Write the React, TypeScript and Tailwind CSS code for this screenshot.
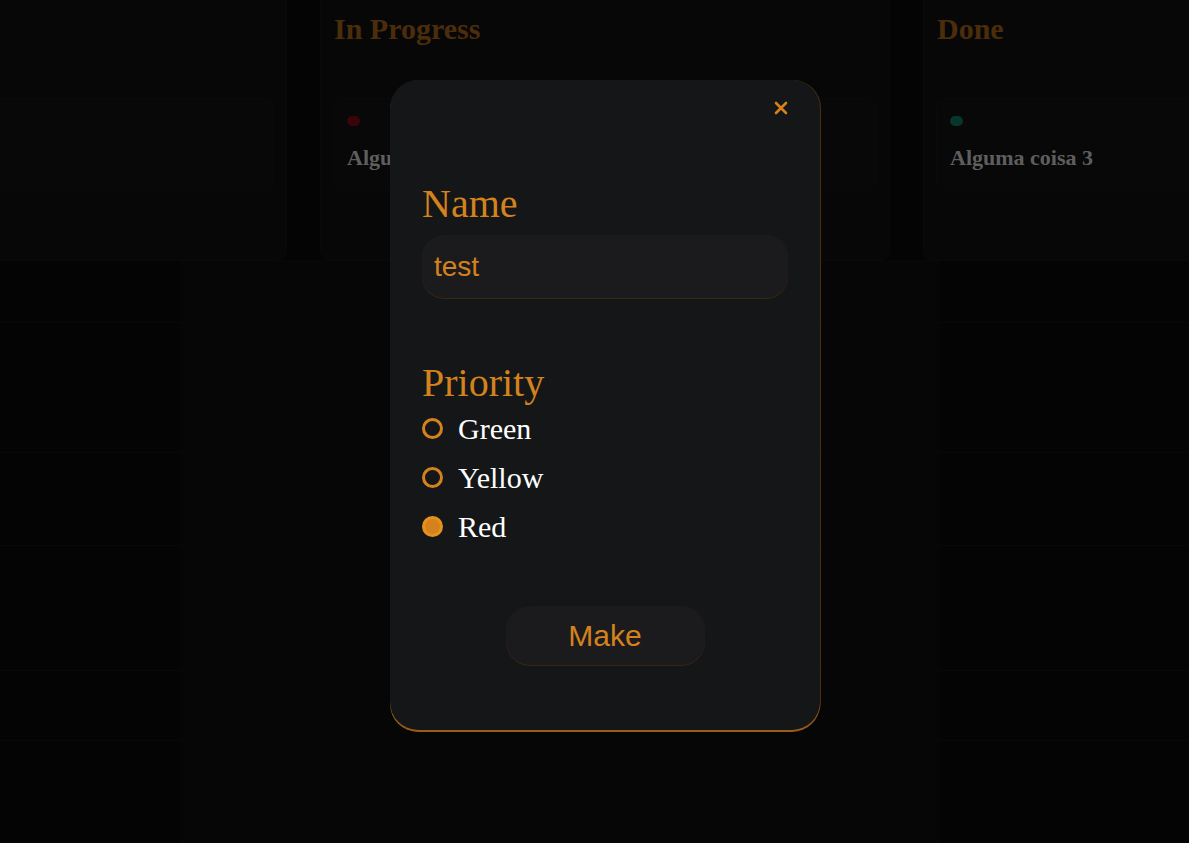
import React, { useState } from 'react';

type Task = { id: number; title: string; dot: string };

// first column sits mostly off-screen, so its title and card text are left empty
const columns: { name: string; tasks: Task[] }[] = [
  { name: '', tasks: [{ id: 1, title: '', dot: 'bg-transparent' }] },
  { name: 'In Progress', tasks: [{ id: 2, title: 'Alguma coisa 2', dot: 'bg-[#3a0509]' }] },
  { name: 'Done', tasks: [{ id: 3, title: 'Alguma coisa 3', dot: 'bg-[#08352c]' }] },
];

const priorities = ['Green', 'Yellow', 'Red'];

// faint rows behind the board (heights in px)
const bands = ['h-[62px]', 'h-[130px]', 'h-[93px]', 'h-[125px]', 'h-[70px]', 'h-[120px]'];

const serif = "font-['Liberation_Serif','Times_New_Roman',serif]";
const sans = "font-['Liberation_Sans',Arial,sans-serif]";

const Column: React.FC<{ name: string; tasks: Task[] }> = ({ name, tasks }) => (
  <div className="w-[570px] shrink-0 h-[272px] rounded-lg bg-[#070707] border border-[#090909] px-[12px] pt-[25px]">
    <h2 className={`${serif} h-[30px] text-[30px] leading-none font-bold text-[#4b2d0c] pl-[1px]`}>{name}</h2>
    <div className="mt-[54px] flex flex-col gap-3">
      {tasks.map((t) => (
        <div key={t.id} className="h-[93px] rounded-lg bg-[#080808] border border-[#0a0a0a] px-[13px] pt-[17px]">
          <div className={`w-[13px] h-[10px] rounded-full ${t.dot}`} />
          <p className={`${serif} mt-[21px] h-[22px] text-[22px] leading-none font-bold text-[#5e5e5e]`}>{t.title}</p>
        </div>
      ))}
    </div>
  </div>
);

const Radio: React.FC<{ checked: boolean }> = ({ checked }) => (
  <span
    className={`w-[21px] h-[21px] rounded-full border-[3px] shrink-0 ${
      checked ? 'border-[#e8901c] bg-[#d4821e]' : 'border-[#d4821e] bg-transparent'
    }`}
  />
);

export default function App() {
  const [name, setName] = useState('test');
  const [priority, setPriority] = useState('Red');

  return (
    <div className="relative w-[1189px] h-[843px] overflow-hidden bg-[#040404]">
      {/* board */}
      <div className="flex gap-[33px] ml-[-283px] mt-[-12px]">
        {columns.map((c, i) => (
          <Column key={i} name={c.name} tasks={c.tasks} />
        ))}
      </div>

      {/* faint rows */}
      <div className="flex flex-col">
        {bands.map((h, i) => (
          <div key={i} className={`${h} border-t border-[#080806]`}>
            <div className="ml-[180px] w-[760px] h-full bg-[#060606]" />
          </div>
        ))}
      </div>

      {/* modal */}
      <div className="absolute left-[390px] top-[80px] w-[430px] h-[650px] rounded-[28px] bg-[#151618] shadow-[0_2px_0_#9a5d17,1px_0_0_#4a2f0e] px-[32px] flex flex-col">
        <div className="flex justify-end pt-[21px]">
          <button className="w-[14px] h-[14px] flex items-center justify-center">
            <svg viewBox="0 0 14 14" className="w-[14px] h-[14px]">
              <path d="M2 2 L12 12 M12 2 L2 12" stroke="#d4821e" strokeWidth="2.6" strokeLinecap="round" />
            </svg>
          </button>
        </div>

        <label className={`${serif} mt-[69px] text-[40px] leading-none text-[#d4821e]`}>Name</label>
        <input
          value={name}
          onChange={(e) => setName(e.target.value)}
          className={`${sans} mt-[11px] h-[63px] w-full rounded-[22px] bg-[#1b1b1d] px-[12px] text-[28px] text-[#d4821e] outline-none shadow-[0_1px_0_#3a2710]`}
        />

        <span className={`${serif} mt-[65px] text-[40px] leading-none text-[#d4821e]`}>Priority</span>
        <div className="mt-[1px] flex flex-col">
          {priorities.map((p) => (
            <div key={p} onClick={() => setPriority(p)} className="h-[49px] flex items-center gap-[15px] cursor-pointer">
              <Radio checked={priority === p} />
              <span className={`${serif} text-[30px] leading-none text-white`}>{p}</span>
            </div>
          ))}
        </div>

        <div className="mt-[55px] flex justify-center">
          <button
            className={`${sans} w-[199px] h-[59px] rounded-[24px] bg-[#1b1b1d] text-[30px] text-[#d4821e] shadow-[0_1px_0_#3a2710]`}
          >
            Make
          </button>
        </div>
      </div>
    </div>
  );
}
